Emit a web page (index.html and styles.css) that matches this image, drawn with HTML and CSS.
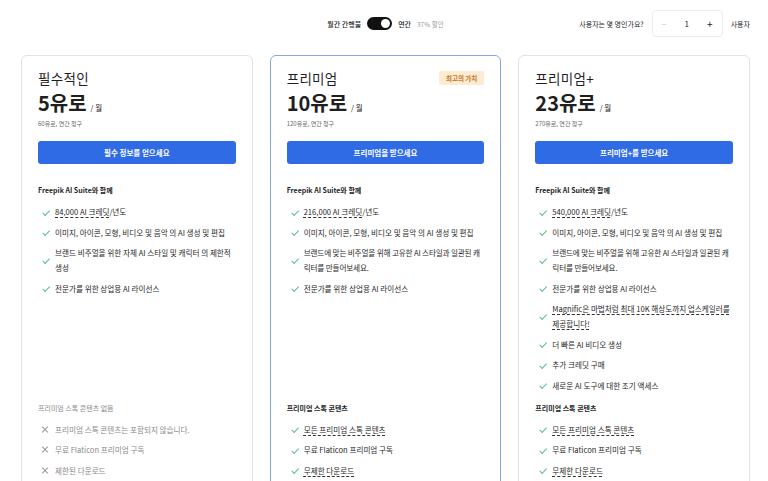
FILE: index.html
```html
<!DOCTYPE html>
<html>
<head>
    <link rel="stylesheet" href="styles.css">
</head>
<body>
    <div class="topbar">
        <div></div>
        <div class="billing">
            <span class="billing-label">월간 간행물</span>
            <span class="switch"><span class="knob"></span></span>
            <span class="billing-label">연간</span>
            <span class="discount">37% 할인</span>
        </div>
        <div class="users">
            <span class="users-q">사용자는 몇 명인가요?</span>
            <div class="stepper">
                <span class="step minus">−</span>
                <span class="count">1</span>
                <span class="step plus">+</span>
            </div>
            <span class="users-q">사용자</span>
        </div>
    </div>

    <div class="plans">
        <!-- Essential -->
        <div class="card">
            <div class="card-head">
                <div class="plan-name">필수적인</div>
            </div>
            <div class="price"><span class="amount">5유로</span><span class="per">/ 월</span></div>
            <div class="billed">60유로, 연간 청구</div>
            <button class="cta">필수 정보를 얻으세요</button>

            <div class="section">
                <div class="section-title">Freepik AI Suite와 함께</div>
                <ul class="features">
                    <li><span class="ico check"></span><span><u>84,000 AI 크레딧</u>/년도</span></li>
                    <li><span class="ico check"></span><span>이미지, 아이콘, 모형, 비디오 및 음악 의 AI 생성 및 편집</span></li>
                    <li><span class="ico check"></span><span>브랜드 비주얼을 위한 자체 AI 스타일 및 캐릭터 의 제한적 생성</span></li>
                    <li><span class="ico check"></span><span>전문가를 위한 상업용 AI 라이선스</span></li>
                </ul>
            </div>

            <div class="section bottom muted">
                <div class="section-title">프리미엄 스톡 콘텐츠 없음</div>
                <ul class="features">
                    <li><span class="ico cross"></span><span>프리미엄 스톡 콘텐츠는 포함되지 않습니다.</span></li>
                    <li><span class="ico cross"></span><span>무료 Flaticon 프리미엄 구독</span></li>
                    <li><span class="ico cross"></span><span>제한된 다운로드</span></li>
                </ul>
            </div>
        </div>

        <!-- Premium -->
        <div class="card featured">
            <div class="card-head">
                <div class="plan-name">프리미엄</div>
                <span class="badge">최고의 가치</span>
            </div>
            <div class="price"><span class="amount">10유로</span><span class="per">/ 월</span></div>
            <div class="billed">120유로, 연간 청구</div>
            <button class="cta">프리미엄을 받으세요</button>

            <div class="section">
                <div class="section-title">Freepik AI Suite와 함께</div>
                <ul class="features">
                    <li><span class="ico check"></span><span><u>216,000 AI 크레딧</u>/년도</span></li>
                    <li><span class="ico check"></span><span>이미지, 아이콘, 모형, 비디오 및 음악 의 AI 생성 및 편집</span></li>
                    <li><span class="ico check"></span><span class="wrap-any">브랜드에 맞는 비주얼을 위해 고유한 AI 스타일과 일관된 캐릭터를 만들어보세요.</span></li>
                    <li><span class="ico check"></span><span>전문가를 위한 상업용 AI 라이선스</span></li>
                </ul>
            </div>

            <div class="section bottom">
                <div class="section-title">프리미엄 스톡 콘텐츠</div>
                <ul class="features">
                    <li><span class="ico check"></span><span><u>모든 프리미엄 스톡 콘텐츠</u></span></li>
                    <li><span class="ico check"></span><span>무료 Flaticon 프리미엄 구독</span></li>
                    <li><span class="ico check"></span><span><u>무제한 다운로드</u></span></li>
                </ul>
            </div>
        </div>

        <!-- Premium+ -->
        <div class="card">
            <div class="card-head">
                <div class="plan-name">프리미엄+</div>
            </div>
            <div class="price"><span class="amount">23유로</span><span class="per">/ 월</span></div>
            <div class="billed">270유로, 연간 청구</div>
            <button class="cta">프리미엄+를 받으세요</button>

            <div class="section">
                <div class="section-title">Freepik AI Suite와 함께</div>
                <ul class="features">
                    <li><span class="ico check"></span><span><u>540,000 AI 크레딧</u>/년도</span></li>
                    <li><span class="ico check"></span><span>이미지, 아이콘, 모형, 비디오 및 음악 의 AI 생성 및 편집</span></li>
                    <li><span class="ico check"></span><span class="wrap-any">브랜드에 맞는 비주얼을 위해 고유한 AI 스타일과 일관된 캐릭터를 만들어보세요.</span></li>
                    <li><span class="ico check"></span><span>전문가를 위한 상업용 AI 라이선스</span></li>
                    <li><span class="ico check"></span><span><u>Magnific은 마법처럼 최대 10K 해상도까지 업스케일러를 제공합니다!</u></span></li>
                    <li><span class="ico check"></span><span>더 빠른 AI 비디오 생성</span></li>
                    <li><span class="ico check"></span><span>추가 크레딧 구매</span></li>
                    <li><span class="ico check"></span><span>새로운 AI 도구에 대한 조기 액세스</span></li>
                </ul>
            </div>

            <div class="section bottom">
                <div class="section-title">프리미엄 스톡 콘텐츠</div>
                <ul class="features">
                    <li><span class="ico check"></span><span><u>모든 프리미엄 스톡 콘텐츠</u></span></li>
                    <li><span class="ico check"></span><span>무료 Flaticon 프리미엄 구독</span></li>
                    <li><span class="ico check"></span><span><u>무제한 다운로드</u></span></li>
                </ul>
            </div>
        </div>
    </div>
</body>
</html>
```
FILE: styles.css
```css
body {
    margin: 0;
    font-family: "Noto Sans CJK KR", "Noto Sans", sans-serif;
    color: #1f1f1f;
    background: #fff;
}

.topbar {
    display: grid;
    grid-template-columns: 1fr auto 1fr;
    align-items: center;
    height: 47px;
    padding: 0 18px 0 21px;
}

.billing {
    display: flex;
    align-items: center;
    gap: 6px;
    font-size: 7px;
}

.billing-label {
    font-weight: 500;
}

.switch {
    width: 25px;
    height: 13px;
    border-radius: 7px;
    background: #111;
    display: flex;
    align-items: center;
    justify-content: flex-end;
    padding: 0 2px;
    box-sizing: border-box;
}

.knob {
    width: 9px;
    height: 9px;
    border-radius: 50%;
    background: #fff;
}

.discount {
    color: #9a9a9a;
    font-size: 6.5px;
}

.users {
    display: flex;
    align-items: center;
    justify-content: flex-end;
    gap: 8px;
    font-size: 7px;
}

.stepper {
    display: flex;
    align-items: center;
    justify-content: space-between;
    width: 71px;
    height: 27px;
    box-sizing: border-box;
    border: 1px solid #ececec;
    border-radius: 4px;
    padding: 0 9px;
    font-size: 8px;
}

.step.minus {
    color: #c4c4c4;
}

.step.plus {
    font-size: 10px;
}

.plans {
    display: grid;
    grid-template-columns: repeat(3, 1fr);
    gap: 17px;
    padding: 8px 18px 0 21px;
    align-items: stretch;
}

.card {
    border: 1px solid #e3e3e3;
    border-radius: 6px;
    padding: 12px 16px 16px;
    display: flex;
    flex-direction: column;
}

.card.featured {
    border-color: #8aa6ea;
}

.card-head {
    display: flex;
    justify-content: space-between;
    align-items: center;
    height: 20px;
}

.plan-name {
    font-size: 13.5px;
    font-weight: 400;
    letter-spacing: 0.3px;
}

.badge {
    background: #fdebd2;
    color: #c9772a;
    font-size: 6.5px;
    font-weight: 700;
    padding: 2px 7px;
    border-radius: 2px;
}

.price {
    margin-top: 4px;
    display: flex;
    align-items: baseline;
    gap: 4px;
    line-height: 22px;
}

.amount {
    font-size: 20px;
    font-weight: 700;
}

.per {
    font-size: 7.5px;
}

.billed {
    font-size: 6px;
    color: #666;
    line-height: 9px;
}

.cta {
    margin-top: 13px;
    height: 23px;
    border: none;
    border-radius: 3px;
    background: #2f6be5;
    color: #fff;
    font-family: inherit;
    font-size: 7.5px;
    font-weight: 700;
}

.section {
    margin-top: 20px;
}

.section.bottom {
    margin-top: auto;
    padding-top: 9px;
}

.section-title {
    font-size: 7px;
    font-weight: 700;
    line-height: 12px;
}

.features {
    list-style: none;
    margin: 8px 0 0;
    padding: 0;
    display: flex;
    flex-direction: column;
    gap: 5.5px;
}

.features li {
    display: flex;
    align-items: center;
    gap: 6px;
    font-size: 7.6px;
    line-height: 15px;
    padding-left: 3px;
}

.wrap-any {
    word-break: break-all;
    letter-spacing: -0.15px;
}

.features u {
    text-decoration: underline dashed #333;
    text-underline-offset: 2px;
}

.ico {
    flex: none;
    width: 8px;
    height: 8px;
    position: relative;
}

.ico.check::after {
    content: "";
    position: absolute;
    left: 1px;
    top: 0;
    width: 6px;
    height: 3px;
    border-left: 1px solid #5bbf9a;
    border-bottom: 1px solid #5bbf9a;
    transform: rotate(-45deg) translate(-1px, 2px);
}

.ico.cross::before,
.ico.cross::after {
    content: "";
    position: absolute;
    left: 0;
    top: 3.5px;
    width: 8px;
    height: 1px;
    background: #999;
    transform: rotate(45deg);
}

.ico.cross::after {
    transform: rotate(-45deg);
}

.muted .section-title {
    color: #8a8a8a;
    font-weight: 400;
}

.muted .features li {
    color: #8a8a8a;
}
```
